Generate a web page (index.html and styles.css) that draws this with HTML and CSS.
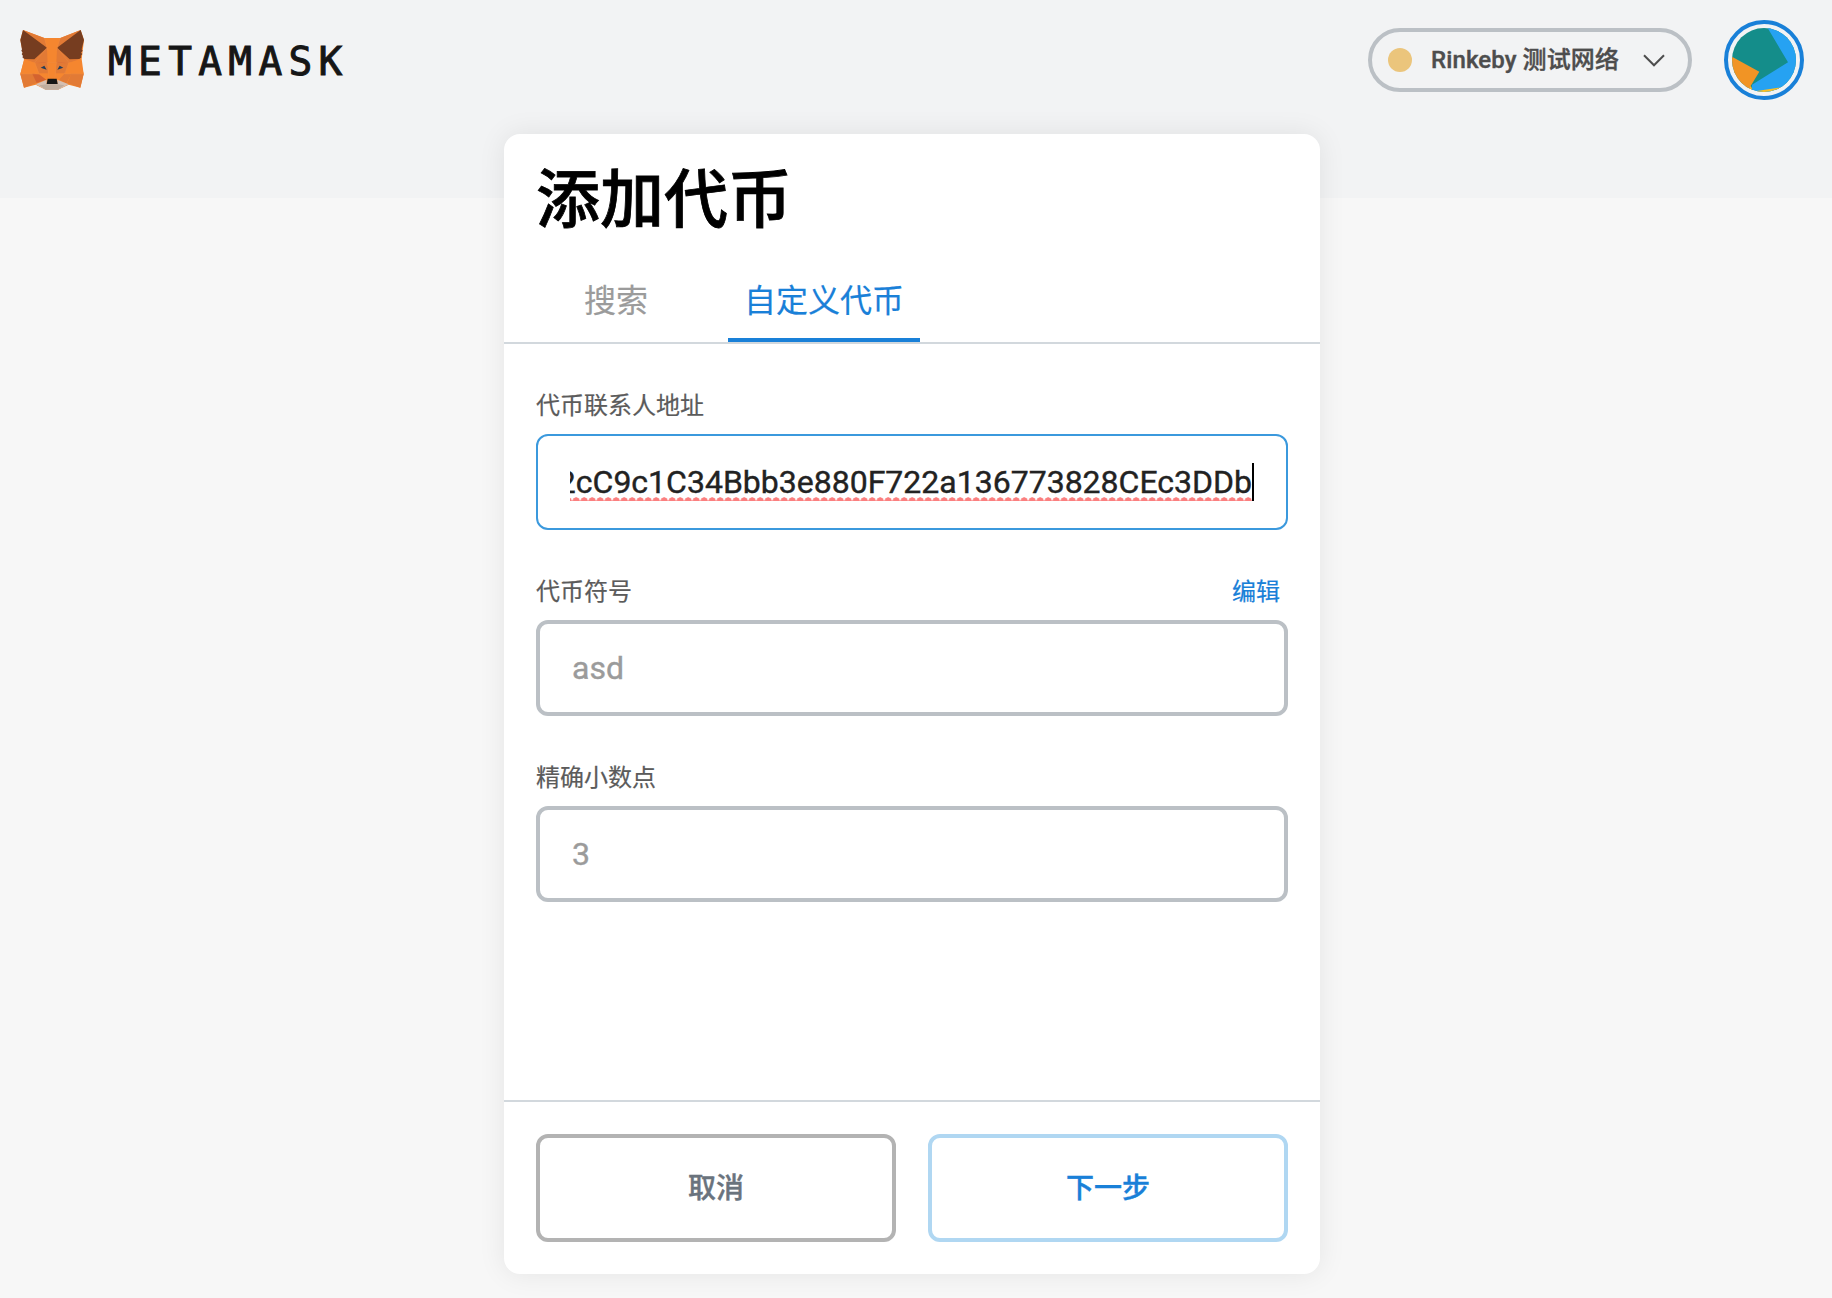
FILE: index.html
```html
<!DOCTYPE html>
<html lang="zh-CN">
<head>
<meta charset="utf-8">
<title>MetaMask</title>
<link rel="stylesheet" href="styles.css">
</head>
<body>
<div class="app">
  <header class="header">
    <div class="logo">
      <svg class="fox" viewBox="61 60 192 180" width="64" height="60">
        <path fill="#f5862f" d="M70 60 134 84H182L243 60 253 90 246 147 252 192 242 233 207 224 175 239H138L108 224 73 233 62 192 73 150 62 90Z"/>
        <path fill="#e27a35" d="M70 60 134 84 142 113ZM243 60 182 84 172 113ZM75 148 104 148 142 113 144 158H105ZM240 148 210 148 172 113 170 158H208Z"/>
        <path fill="#e27a35" d="M62 192H100L112 218 73 233ZM215 192H194L178 209 207 224 201 218Z"/>
        <path fill="#f5862f" d="M73 150 105 158 118 192H62ZM242 150 208 158 194 192H252Z"/>
        <path fill="#d4632f" d="M98 191 118 193 140 209 111 219ZM105 158 142 156 128 164ZM208 158 171 156 185 164Z"/>
        <path fill="#e27a35" d="M215 191 252 192 242 233 203 219ZM107 160 142 158 148 190 118 190ZM206 160 171 158 166 190 196 190Z"/>
        <path fill="#763d20" d="M70 60 142 113 104 148 75 147 68 142 70 138 66 132 69 128 65 122 67 118 62 90ZM243 60 172 113 210 148 239 147 245 142 243 138 248 132 244 128 249 122 246 118 253 90Z"/>
        <path fill="#f5862f" d="M134 84H182L170 122 168 209H145L144 122Z"/>
        <path fill="#d5bfb2" d="M108 223 141 209V222H173V209L207 223 175 239H138Z"/>
        <path fill="#c0ad9e" d="M119 226 141 223H173L194 226 175 239H138Z"/>
        <path fill="#161616" d="M144 206H171L174 222H141Z"/>
        <path fill="#263e57" d="M123 173 134 167 141 179ZM191 173 180 167 173 179Z"/>
        <path fill="none" stroke="#e9904f" stroke-width=".9" d="M134 84 145 122M182 84 170 122M142 113 105 158H208L172 113M105 158 118 192H62M208 158 194 192H252M143 158 148 206M170 158 166 206"/>
      </svg>
      <span class="wordmark">METAMASK</span>
    </div>
    <div class="controls">
      <div class="network">
        <span class="network-dot"></span>
        <span class="network-name">Rinkeby 测试网络</span>
        <svg class="chevron" width="22" height="13" viewBox="0 0 22 13"><path d="M1 1.2 11 11.3 21 1.2" fill="none" stroke="#4d4d4d" stroke-width="2"/></svg>
      </div>
      <div class="account">
        <svg width="64" height="64" viewBox="0 0 192 192">
          <clipPath id="round"><circle cx="96" cy="96" r="96"/></clipPath>
          <g clip-path="url(#round)">
            <path fill="#148d8a" d="M0 0H192V192H0Z"/>
            <path fill="#26a2f2" d="M104 -5H192V192H60V170L168 103Z"/>
            <path fill="#f19425" d="M0 86 82 131 56 174 60 184 50 192H0Z"/>
            <path fill="#fbbf24" d="M57 174 60 186 50 184ZM74 189 150 178V192H74Z"/>
          </g>
        </svg>
      </div>
    </div>
  </header>
  <main class="card">
    <h1 class="title">添加代币</h1>
    <nav class="tabs">
      <div class="tab">搜索</div>
      <div class="tab tab-active">自定义代币</div>
    </nav>
    <section class="form">
      <div class="field">
        <div class="label">代币联系人地址</div>
        <div class="input input-focused">
          <div class="scroll"><span class="typed">2cC9c1C34Bbb3e880F722a136773828CEc3DDb</span></div>
        </div>
      </div>
      <div class="field">
        <div class="label">代币符号<span class="edit">编辑</span></div>
        <div class="input">asd</div>
      </div>
      <div class="field">
        <div class="label">精确小数点</div>
        <div class="input">3</div>
      </div>
    </section>
    <footer class="footer">
      <button class="button">取消</button>
      <button class="button button-next">下一步</button>
    </footer>
  </main>
</div>
</body>
</html>
```
FILE: styles.css
```css
* { box-sizing: border-box; }
body {
  margin: 0;
  background: #f7f7f7;
  font-family: Roboto, "Noto Sans CJK SC", sans-serif;
}
.app {
  height: 1298px;
  overflow: hidden;
  background: linear-gradient(#f2f3f4 198px, #f7f7f7 198px);
}
.header {
  height: 134px;
  padding: 20px 28px 0 20px;
  display: flex;
  justify-content: space-between;
  align-items: flex-start;
}
.logo { display: flex; align-items: center; height: 80px; }
.fox { display: block; }
.wordmark {
  margin-left: 24px;
  padding-top: 1px;
  font: 39.5px/48px "DejaVu Sans Mono", monospace;
  letter-spacing: 6.3px;
  color: #161616;
  -webkit-text-stroke: 1px #161616;
}
.controls { display: flex; align-items: center; gap: 32px; }
.network {
  width: 324px;
  height: 64px;
  padding: 0 23px 0 16px;
  border: 4px solid #bbc0c5;
  border-radius: 32px;
  display: flex;
  align-items: center;
}
.network-dot { width: 24px; height: 24px; border-radius: 50%; background: #ebc57c; }
.network-name {
  margin-left: 19px;
  font-size: 24px;
  line-height: 32px;
  letter-spacing: .1px;
  font-weight: 500;
  color: #4d4d4d;
  -webkit-text-stroke: .4px #4d4d4d;
  white-space: nowrap;
}
.chevron { margin-left: auto; }
.account {
  width: 80px;
  height: 80px;
  padding: 4px;
  border: 4px solid #1980d8;
  border-radius: 50%;
}
.account svg { display: block; }
.card {
  width: 816px;
  height: 1140px;
  margin: 0 auto 0 504px;
  border-radius: 16px;
  background: #fff;
  box-shadow: 0 0 28px rgba(0, 0, 0, .08);
  display: flex;
  flex-direction: column;
}
.title {
  margin: 0;
  padding: 22px 32px 0;
  height: 132px;
  font-size: 64px;
  line-height: 90px;
  font-weight: 500;
  color: #000;
  -webkit-text-stroke: .8px #000;
}
.tabs {
  height: 78px;
  padding-left: 64px;
  border-bottom: 2px solid #d2d8dd;
  display: flex;
  gap: 64px;
}
.tab {
  padding: 11px 16px 0;
  font-size: 32px;
  line-height: 48px;
  color: #9b9b9b;
  -webkit-text-stroke: .2px currentColor;
}
.tab-active { color: #1980d8; border-bottom: 4px solid #1980d8; }
.form {
  flex: 1;
  padding: 45px 32px 0;
  display: flex;
  flex-direction: column;
  gap: 45px;
}
.field { display: flex; flex-direction: column; gap: 11px; }
.label {
  height: 34px;
  line-height: 34px;
  padding-right: 8px;
  font-size: 24px;
  color: #5b5b5b;
  -webkit-text-stroke: .2px currentColor;
  display: flex;
  justify-content: space-between;
}
.edit { color: #1980d8; }
.input {
  height: 96px;
  padding: 0 32px;
  border: 4px solid #bbc0c5;
  border-radius: 12px;
  display: flex;
  align-items: center;
  font-size: 32px;
  line-height: 38px;
  color: #9b9b9b;
  -webkit-text-stroke: .4px currentColor;
}
.input-focused {
  border: 2px solid #3b99dd;
  color: #222;
}
.scroll {
  flex: 1;
  overflow: hidden;
  display: flex;
  justify-content: flex-end;
}
.typed {
  border-right: 2px solid #000;
  background: radial-gradient(circle at 4px 4px, #fb7f7f 3.4px, transparent 3.9px) right bottom / 8px 4px repeat-x;
}
.footer {
  height: 174px;
  padding: 32px;
  border-top: 2px solid #d2d8dd;
  display: flex;
  gap: 32px;
}
.button {
  flex: 1;
  height: 108px;
  padding: 2px 0 0;
  border: 4px solid #b3b3b3;
  border-radius: 12px;
  background: #fff;
  font: 500 28px/40px Roboto, "Noto Sans CJK SC", sans-serif;
  color: #6a737d;
  -webkit-text-stroke: .4px currentColor;
}
.button-next { border-color: #b0d7f2; color: #1980d8; }
```
